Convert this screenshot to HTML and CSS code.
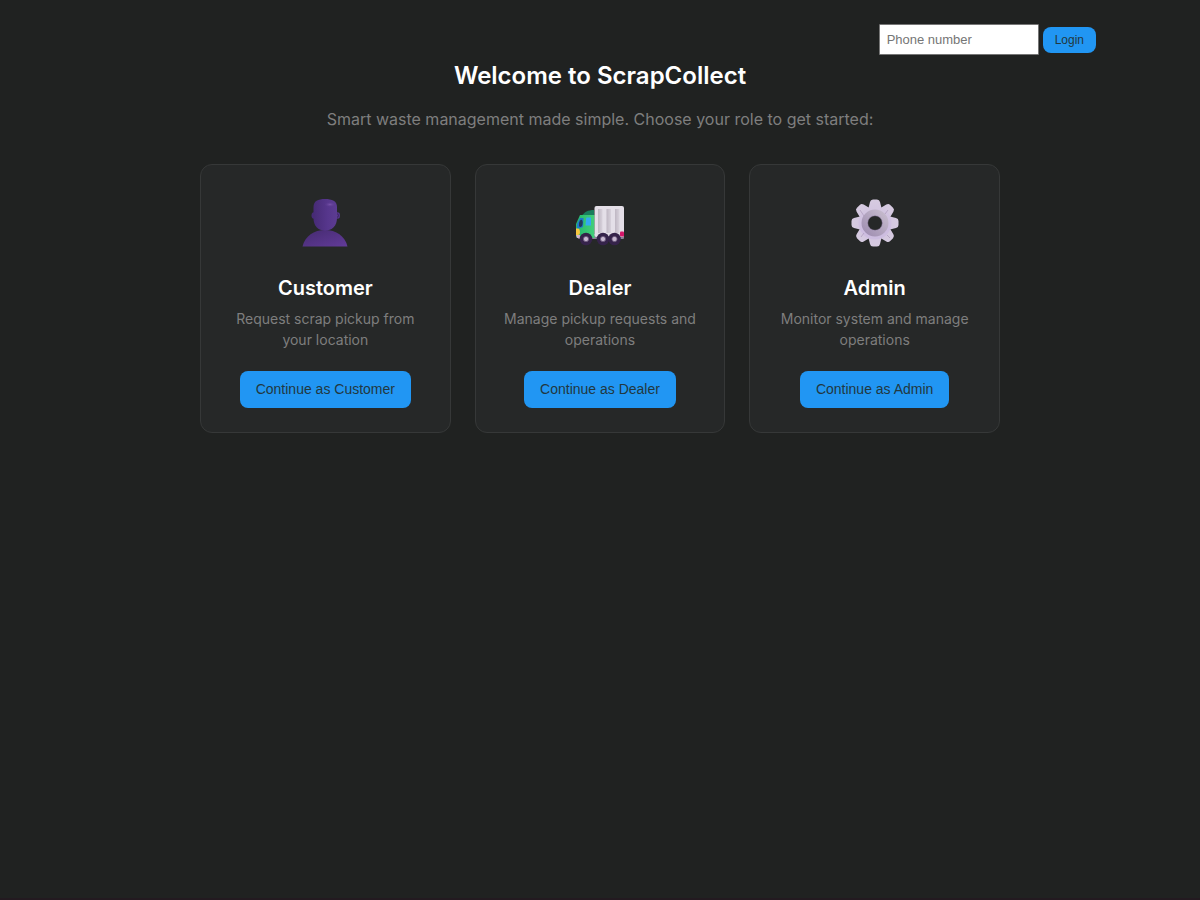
FILE: index.html
```html
<!DOCTYPE html>
<html lang="en">
<head>
<meta charset="utf-8">
<meta name="viewport" content="width=device-width, initial-scale=1">
<title>ScrapCollect</title>
<link rel="stylesheet" href="styles.css">
</head>
<body>
<header class="topbar">
  <form class="login">
    <input class="phone" type="tel" placeholder="Phone number" aria-label="Phone number">
    <button class="btn btn-small" type="button">Login</button>
  </form>
</header>
<main class="welcome">
  <h1 class="title">Welcome to ScrapCollect</h1>
  <p class="lead">Smart waste management made simple. Choose your role to get started:</p>
  <div class="roles">
    <section class="card">
      <svg class="icon" viewBox="0 0 48 48" aria-hidden="true">
        <defs>
          <linearGradient id="head" x1="0" y1="0" x2="1" y2="0"><stop offset="0" stop-color="#472b76"/><stop offset=".6" stop-color="#56368c"/><stop offset="1" stop-color="#5c3c91"/></linearGradient>
          <linearGradient id="bust" x1="0" y1="0" x2="1" y2="1"><stop offset="0" stop-color="#452b70"/><stop offset="1" stop-color="#623b99"/></linearGradient>
          <radialGradient id="shine"><stop offset="0" stop-color="#7852aa"/><stop offset="1" stop-color="#5d3d91" stop-opacity="0"/></radialGradient>
        </defs>
        <path d="M1.500 47.500C4 37 13 31 24 31S44 37 46.500 47.500Z" fill="url(#bust)"/>
        <ellipse cx="13" cy="16.500" rx="2.500" ry="3.200" fill="#472b76"/>
        <ellipse cx="36.500" cy="16.500" rx="2.500" ry="3.200" fill="#55358b"/>
        <path d="M36.500 14.500Q38.500 16.500 36.500 18.500" fill="none" stroke="#3b235f"/>
        <path d="M12.500 8C12.500 2 17 0 24 0S36 2 36 8V19C36 27 31 31.500 24 31.500S12.500 27 12.500 19Z" fill="url(#head)"/>
        <ellipse cx="29" cy="5.500" rx="5.500" ry="2.500" fill="url(#shine)"/>
      </svg>
      <h2 class="role">Customer</h2>
      <p class="about">Request scrap pickup from your location</p>
      <button class="btn" type="button">Continue as Customer</button>
    </section>
    <section class="card">
      <svg class="icon" viewBox="0 0 48 48" aria-hidden="true">
        <defs>
          <linearGradient id="cab" x1="0" y1="0" x2="1" y2="0"><stop offset="0" stop-color="#25b96d"/><stop offset="1" stop-color="#43cf7a"/></linearGradient>
          <linearGradient id="panel" x1="0" y1="0" x2="1" y2="0"><stop offset="0" stop-color="#bfb7c3"/><stop offset="1" stop-color="#d8d2dc"/></linearGradient>
        </defs>
        <rect x="2" y="35" width="46" height="5" rx="1" fill="#8b8096"/>
        <path d="M6 17C8 13 12 11 18 11V20H6Z" fill="#187e5d"/>
        <path d="M4 16H18.500V39H1Q0 39 0 36V25Z" fill="url(#cab)"/>
        <rect x="18.500" y="7" width="29.500" height="31" rx="2" fill="#e4dfe8"/>
        <path d="M22 10H26.500V34H22Z" fill="url(#panel)"/>
        <path d="M30.500 10H35V34H30.500Z" fill="url(#panel)"/>
        <path d="M39 10H43.500V34H39Z" fill="url(#panel)"/>
        <path d="M4 19H7.500L7 28L1 30V25Z" fill="#1d78cb"/>
        <path d="M10.500 18.500H15V26.500H9.500L10 20Z" fill="#33a9ef"/>
        <path d="M3 24Q4 20 6 21Q7.500 23 6 27Q4 29 3 27Z" fill="#22395c"/>
        <path d="M0 29.500H2.500Q4 30 4 33Q4 36 2 36H0Z" fill="#f7c63e"/>
        <path d="M0 36H4V39H1Z" fill="#d4b5cb"/>
        <rect x="44" y="32.500" width="4" height="5" rx="1" fill="#d51669"/>
        <g fill="#35234a"><circle cx="10" cy="40" r="6.300"/><circle cx="27" cy="40" r="6.300"/><circle cx="38.500" cy="40" r="6.300"/></g>
        <g fill="#c7b9d0" stroke="#69557a" stroke-width=".8"><circle cx="10" cy="40" r="2.600"/><circle cx="27" cy="40" r="2.600"/><circle cx="38.500" cy="40" r="2.600"/></g>
      </svg>
      <h2 class="role">Dealer</h2>
      <p class="about">Manage pickup requests and operations</p>
      <button class="btn" type="button">Continue as Dealer</button>
    </section>
    <section class="card">
      <svg class="icon" viewBox="0 0 48 48" aria-hidden="true">
        <defs>
          <linearGradient id="gear" gradientUnits="userSpaceOnUse" x1="24" y1="0" x2="24" y2="30"><stop offset="0" stop-color="#d6cbe0"/><stop offset="1" stop-color="#cdbde0"/></linearGradient>
          <linearGradient id="ring" x1="1" y1="0" x2="0" y2="1"><stop offset="0" stop-color="#c6bbcd"/><stop offset="1" stop-color="#a08fb2"/></linearGradient>
        </defs>
        <g fill="url(#gear)">
          <path id="tooth" d="M17 11L19 3Q19.500 .5 22 .5H26Q28.500 .5 29 3L31 11Z"/>
          <use href="#tooth" transform="rotate(45 24 24)"/><use href="#tooth" transform="rotate(90 24 24)"/><use href="#tooth" transform="rotate(135 24 24)"/><use href="#tooth" transform="rotate(180 24 24)"/><use href="#tooth" transform="rotate(225 24 24)"/><use href="#tooth" transform="rotate(270 24 24)"/><use href="#tooth" transform="rotate(315 24 24)"/>
          <circle cx="24" cy="24" r="16.500"/>
        </g>
        <circle cx="24" cy="24" r="10.500" fill="none" stroke="url(#ring)" stroke-width="6"/>
        <path d="M9 11L13 17M37 11L34 15M36 36L39 39M10 38L13 34" stroke="#b09ebf" stroke-width=".8"/>
        <circle cx="24" cy="24" r="7.300" fill="#262828" stroke="#8b789d" stroke-width=".5"/>
      </svg>
      <h2 class="role">Admin</h2>
      <p class="about">Monitor system and manage operations</p>
      <button class="btn" type="button">Continue as Admin</button>
    </section>
  </div>
</main>
</body>
</html>
```
FILE: styles.css
```css
* { box-sizing: border-box; }
body {
  margin: 0;
  min-height: 100vh;
  background: #202221;
  border-bottom: 2px solid #231a20;
  color: #fff;
  font-family: Inter, "Liberation Sans", sans-serif;
}
.topbar {
  max-width: 1000px;
  margin: 0 auto;
  padding: 24px 4px 0;
}
.login {
  display: flex;
  justify-content: flex-end;
  align-items: center;
  gap: 4px;
}
.phone {
  width: 160px;
  height: 31px;
  padding: 7px;
  border: 1px solid #767676;
  border-radius: 1px;
  background: #fff;
  font: 13px "Liberation Sans", sans-serif;
}
.phone::placeholder { color: #757575; }
.btn {
  padding: 10px 16px;
  border: 0;
  border-radius: 8px;
  background: #2196f3;
  color: #213840;
  font: 14px/17px "Liberation Sans", sans-serif;
}
.btn-small {
  padding: 5px 12px;
  font-size: 12px;
  line-height: 16px;
}
.welcome {
  max-width: 800px;
  margin: 0 auto;
  text-align: center;
}
.title {
  margin: 5px 0 13px;
  font-size: 24px;
  line-height: 32px;
  font-weight: 600;
}
.lead {
  margin: 0 0 31px;
  color: #7e7e7e;
  font-size: 16px;
  line-height: 28px;
}
.roles {
  display: grid;
  grid-template-columns: repeat(auto-fit, minmax(220px, 1fr));
  gap: 24px;
}
.card {
  padding: 34px 24px 24px;
  border: 1px solid #363838;
  border-radius: 12px;
  background: #262828;
}
.icon {
  display: block;
  width: 48px;
  height: 48px;
  margin: 0 auto 28px;
}
.role {
  margin: 0 0 7px;
  font-size: 20px;
  line-height: 26px;
  font-weight: 600;
}
.about {
  margin: 0 0 21px;
  color: #7e7e7e;
  font-size: 14px;
  line-height: 21px;
}
```
